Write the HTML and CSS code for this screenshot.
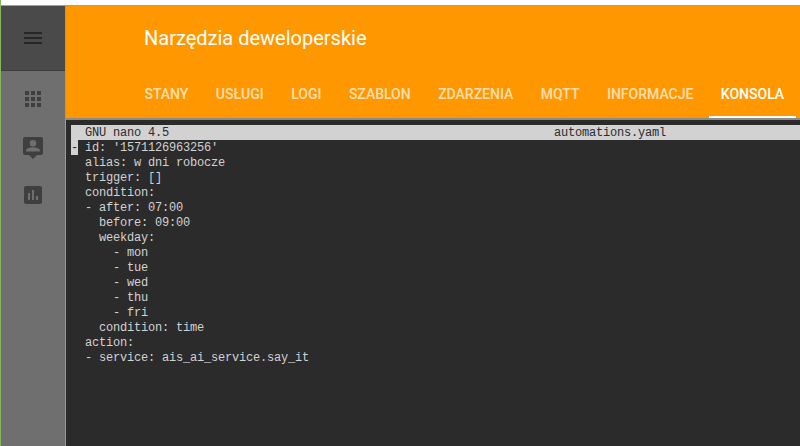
FILE: index.html
```html
<!DOCTYPE html>
<html lang="pl">
<head>
<meta charset="utf-8">
<title>Narzędzia deweloperskie</title>
<link rel="stylesheet" href="styles.css">
</head>
<body>
<div class="topstrip"></div>
<div class="app">
  <nav class="sidebar">
    <div class="menu-head">
      <svg class="ico ico-dark" viewBox="0 0 24 24"><path d="M3 6h18v2H3zM3 11h18v2H3zM3 16h18v2H3z"/></svg>
    </div>
    <div class="side-items">
      <svg class="ico" viewBox="0 0 24 24"><path d="M4 4h4v4H4zM10 4h4v4h-4zM16 4h4v4h-4zM4 10h4v4H4zM10 10h4v4h-4zM16 10h4v4h-4zM4 16h4v4H4zM10 16h4v4h-4zM16 16h4v4h-4z"/></svg>
      <svg class="ico" viewBox="0 0 24 24"><path fill-rule="evenodd" d="M4 2h16a2 2 0 0 1 2 2v14a2 2 0 0 1-2 2h-4l-4 4-4-4H4a2 2 0 0 1-2-2V4a2 2 0 0 1 2-2zM12 5a3.300 3.300 0 1 0 0 6.600A3.300 3.300 0 0 0 12 5zM5 16.500h14v-1c0-2.300-4.700-3.300-7-3.300s-7 1-7 3.300z"/></svg>
      <svg class="ico" viewBox="0 0 24 24"><path fill-rule="evenodd" d="M5 3h14a2 2 0 0 1 2 2v14a2 2 0 0 1-2 2H5a2 2 0 0 1-2-2V5a2 2 0 0 1 2-2zM7 10v7h2v-7zM11 7v10h2V7zM15 13v4h2v-4z"/></svg>
    </div>
  </nav>
  <main class="main">
    <header class="header">
      <h1 class="title">Narzędzia deweloperskie</h1>
      <div class="tabs">
        <span class="tab">STANY</span>
        <span class="tab">USŁUGI</span>
        <span class="tab">LOGI</span>
        <span class="tab">SZABLON</span>
        <span class="tab">ZDARZENIA</span>
        <span class="tab">MQTT</span>
        <span class="tab">INFORMACJE</span>
        <span class="tab active">KONSOLA</span>
      </div>
    </header>
    <section class="terminal">
      <div class="term-title">  GNU nano 4.5                                                       automations.yaml</div>
      <div class="term-body"><span class="cursor">-</span> id: '1571126963256'
  alias: w dni robocze
  trigger: []
  condition:
  - after: 07:00
    before: 09:00
    weekday:
      - mon
      - tue
      - wed
      - thu
      - fri
    condition: time
  action:
  - service: ais_ai_service.say_it</div>
    </section>
  </main>
</div>
</body>
</html>
```

FILE: styles.css
```css
* { box-sizing: border-box; }
html, body { margin: 0; height: 100%; overflow: hidden; }
body {
  background: #fff;
  border-left: 1px solid #8bb35c;
  display: flex;
  flex-direction: column;
  font-family: Roboto, sans-serif;
}
.topstrip { height: 5px; background: #fff; flex: none; }
.app { flex: 1; display: flex; min-height: 0; border-top: 1px solid #a0a0a0; }
.sidebar {
  width: 65px;
  flex: none;
  background: #6f6f6f;
  border-right: 1px solid #9a9a9a;
  display: flex;
  flex-direction: column;
}
.menu-head {
  height: 65px;
  background: #4a4a4a;
  border-bottom: 1px solid #3c3c3c;
  display: flex;
  align-items: center;
  justify-content: center;
}
.side-items {
  display: flex;
  flex-direction: column;
  align-items: center;
  gap: 24px;
  padding-top: 16px;
}
.ico { width: 24px; height: 24px; fill: #3f3f3f; display: block; }
.ico-dark { fill: #262626; }
.main { flex: 1; min-width: 0; display: flex; flex-direction: column; }
.header {
  height: 114px;
  flex: none;
  background: #ff9800;
  border-bottom: 2px solid #8c8c8c;
  padding-left: 78px;
  display: flex;
  flex-direction: column;
  color: #fff;
}
.title {
  margin: 0;
  font-size: 20px;
  font-weight: 400;
  line-height: 32px;
  padding-top: 16px;
  height: 64px;
}
.tabs { display: flex; gap: 3.43px; margin-left: -11.6px; height: 48px; }
.tab {
  padding: 0 12px;
  font-size: 14px;
  font-weight: 500;
  line-height: 48px;
  height: 48px;
  color: rgba(255, 255, 255, .7);
}
.tab.active { color: #fff; border-bottom: 2px solid #fff; }
.terminal {
  flex: 1;
  background: #2b2b2b;
  padding: 5px 0 0 5px;
  font-family: "Liberation Mono", monospace;
  font-size: 12px;
  letter-spacing: -0.2px;
  line-height: 15px;
  color: #d2d2d2;
  overflow: hidden;
}
.term-title { background: #d2d2d2; color: #2b2b2b; height: 15px; padding-top: 1px; white-space: pre; }
.term-body {
  white-space: pre;
  padding-top: 1px;
  background: linear-gradient(#d2d2d2, #d2d2d2) 0 0 / 7px 15px no-repeat;
}
.cursor { color: #2b2b2b; }
```
